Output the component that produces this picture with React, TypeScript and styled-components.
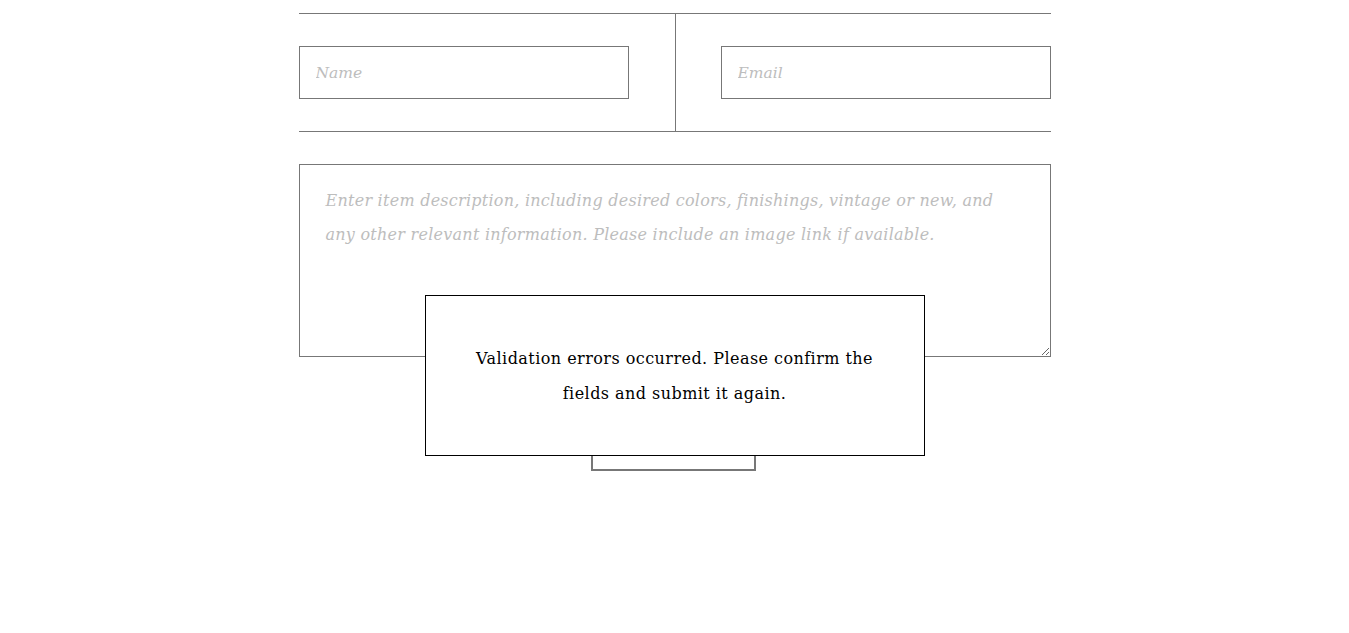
import React from 'react';
import styled, { createGlobalStyle } from 'styled-components';

const GlobalStyle = createGlobalStyle`
  html, body {
    margin: 0;
    padding: 0;
    background: #fff;
    font-family: "DejaVu Serif", "Liberation Serif", serif;
  }
`;

const Page = styled.div`
  position: relative;
  width: 752px;
  margin: 13px auto 0;
`;

const ContactRow = styled.div`
  display: grid;
  grid-template-columns: 1fr 1fr;
  border-top: 1px solid #777;
  border-bottom: 1px solid #777;
`;

const Cell = styled.div<{ $align: 'start' | 'end' }>`
  display: flex;
  justify-content: ${p => (p.$align === 'start' ? 'flex-start' : 'flex-end')};
  padding: 32px 0;
  ${p => p.$align === 'end' && 'border-left: 1px solid #777;'}
`;

const TextInput = styled.input`
  box-sizing: border-box;
  width: 330px;
  height: 53px;
  padding: 0 16px;
  border: 1px solid #777;
  border-radius: 0;
  outline: none;
  font-family: "DejaVu Serif", serif;
  font-size: 15.5px;
  font-style: italic;
  letter-spacing: 0;
  &::placeholder {
    color: #bdbdbd;
  }
`;

const Description = styled.textarea`
  display: block;
  box-sizing: border-box;
  width: 752px;
  height: 193px;
  margin-top: 32px;
  padding: 19px 26px;
  border: 1px solid #777;
  border-radius: 0;
  outline: none;
  resize: vertical;
  font-family: "DejaVu Serif", serif;
  font-size: 16px;
  font-style: italic;
  line-height: 34px;
  letter-spacing: 0.25px;
  &::placeholder {
    color: #bdbdbd;
  }
`;

const SubmitRow = styled.div`
  display: flex;
  justify-content: center;
  margin-top: 54px;
`;

const SubmitButton = styled.button`
  width: 165px;
  height: 60px;
  margin-right: 3px;
  background: #fff;
  border: 2px solid #777;
  border-radius: 0;
  font-family: "DejaVu Serif", serif;
  font-size: 15px;
  letter-spacing: 2px;
  color: #333;
`;

const Notice = styled.div`
  position: absolute;
  top: 282px;
  left: 126px;
  box-sizing: border-box;
  width: 500px;
  height: 161px;
  display: flex;
  align-items: center;
  justify-content: center;
  padding: 0 40px;
  background: #fff;
  border: 1px solid #000;
  font-family: "DejaVu Serif", serif;
  font-size: 16px;
  line-height: 35px;
  letter-spacing: 0.45px;
  text-align: center;
  color: #000;
`;

export default function App() {
  return (
    <>
      <GlobalStyle />
      <Page>
        <ContactRow>
          <Cell $align="start">
            <TextInput placeholder="Name" />
          </Cell>
          <Cell $align="end">
            <TextInput placeholder="Email" />
          </Cell>
        </ContactRow>

        <Description placeholder="Enter item description, including desired colors, finishings, vintage or new, and any other relevant information. Please include an image link if available." />

        <SubmitRow>
          <SubmitButton>Submit</SubmitButton>
        </SubmitRow>

        <Notice>
          Validation errors occurred. Please confirm the fields and submit it again.
        </Notice>
      </Page>
    </>
  );
}
